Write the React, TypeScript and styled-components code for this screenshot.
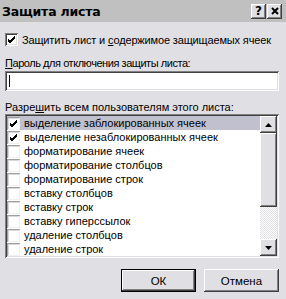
import React from 'react';
import styled, {createGlobalStyle, css} from 'styled-components';

const GlobalStyle = createGlobalStyle`
  html, body {
    margin: 0;
    padding: 0;
    background: #e0dfe3;
  }
  * {
    box-sizing: border-box;
  }
`;

const face = '#e0dfe3';

const raised = css`
  background: ${face};
  box-shadow: inset -1px -1px #404040, inset 1px 1px #ffffff,
    inset -2px -2px #808080, inset 2px 2px ${face};
`;

const sunken = css`
  box-shadow: inset 1px 1px #808080, inset -1px -1px #ffffff,
    inset 2px 2px #404040, inset -2px -2px ${face};
`;

const Dialog = styled.div`
  width: 286px;
  height: 299px;
  background: ${face};
  font-family: 'Liberation Sans', Arial, sans-serif;
  font-size: 11px;
  color: #000;
  display: flex;
  flex-direction: column;
  overflow: hidden;
  white-space: nowrap;
`;

const TitleBar = styled.div`
  height: 22px;
  background: #c0c0c0;
  display: flex;
  align-items: center;
  justify-content: space-between;
  padding: 0 4px 0 2px;
`;

const Title = styled.div`
  font-family: 'DejaVu Sans', sans-serif;
  font-weight: bold;
  font-size: 12.5px;
  letter-spacing: -0.2px;
`;

const TitleButtons = styled.div`
  display: flex;
  gap: 1px;
`;

const TitleButton = styled.div`
  ${raised};
  width: 15px;
  height: 15px;
  display: flex;
  align-items: center;
  justify-content: center;
  font-family: 'DejaVu Sans', sans-serif;
  font-weight: bold;
  font-size: 12px;
  line-height: 1;
`;

const Body = styled.div`
  display: flex;
  flex-direction: column;
  padding: 0 7px 0 5px;
`;

const CheckRow = styled.label`
  display: flex;
  align-items: center;
  gap: 4px;
  margin-top: 11px;
  height: 13px;
  letter-spacing: -0.15px;
`;

const Box = styled.span<{$flat?: boolean}>`
  width: 13px;
  height: 13px;
  flex: none;
  background: #fff;
  display: flex;
  align-items: center;
  justify-content: center;
  ${p =>
    p.$flat
      ? css`
          box-shadow: inset 1px 1px #a0a0a0, inset -1px -1px #f0f0f0,
            inset 2px 2px #d8d8d8;
        `
      : sunken};
`;

const Label = styled.div<{$top: number; $tight?: boolean}>`
  margin-top: ${p => p.$top}px;
  line-height: 13px;
  height: 13px;
  letter-spacing: ${p => (p.$tight ? '-0.45px' : '0')};
`;

const Input = styled.div`
  ${sunken};
  background: #fff;
  margin-top: 1px;
  height: 20px;
  width: 274px;
  padding: 4px 0 0 4px;
`;

const Caret = styled.div`
  width: 1px;
  height: 12px;
  background: #000;
`;

const List = styled.div`
  ${sunken};
  background: #fff;
  width: 274px;
  height: 144px;
  padding: 2px;
  display: flex;
`;

const Items = styled.div`
  flex: 1;
  display: flex;
  flex-direction: column;
`;

const Item = styled.div<{$selected?: boolean}>`
  height: 14px;
  display: flex;
  align-items: center;
  gap: 4px;
  background: ${p => (p.$selected ? '#c1c0cf' : 'transparent')};
`;

const ScrollBar = styled.div`
  width: 17px;
  display: flex;
  flex-direction: column;
  background-color: #f4f4f4;
  background-image: repeating-conic-gradient(#ffffff 0 25%, ${face} 0 50%);
  background-size: 2px 2px;
`;

const ScrollButton = styled.div`
  ${raised};
  height: 17px;
  display: flex;
  align-items: center;
  justify-content: center;
`;

const Thumb = styled.div`
  ${raised};
  height: 74px;
`;

const Track = styled.div`
  flex: 1;
`;

const Buttons = styled.div`
  display: flex;
  justify-content: flex-end;
  gap: 8px;
  margin-top: 11px;
`;

const Button = styled.div<{$default?: boolean}>`
  ${raised};
  width: 75px;
  height: 23px;
  display: flex;
  align-items: center;
  justify-content: center;
  font-size: 11.5px;
  ${p =>
    p.$default &&
    css`
      box-shadow: inset 0 0 0 1px #000, inset -2px -2px #404040,
        inset 2px 2px #ffffff, inset -3px -3px #808080;
    `};
`;

const Check = () => (
  <svg width="9" height="9" viewBox="0 0 9 9">
    <path d="M1 4 L3 6 L8 1 M1 5 L3 7 L8 2 M1 6 L3 8 L8 3" stroke="#000" strokeWidth="1" fill="none" shapeRendering="crispEdges" />
  </svg>
);

const CloseGlyph = () => (
  <svg width="8" height="8" viewBox="0 0 8 8">
    <path d="M1 1 L7 7 M7 1 L1 7" stroke="#000" strokeWidth="2" />
  </svg>
);

const Arrow = ({up}: {up?: boolean}) => (
  <svg width="7" height="4" viewBox="0 0 7 4">
    <path d={up ? 'M0 4 L3.5 0 L7 4 Z' : 'M0 0 L3.5 4 L7 0 Z'} fill="#000" />
  </svg>
);

const permissions: {text: string; checked: boolean}[] = [
  {text: 'выделение заблокированных ячеек', checked: true},
  {text: 'выделение незаблокированных ячеек', checked: true},
  {text: 'форматирование ячеек', checked: false},
  {text: 'форматирование столбцов', checked: false},
  {text: 'форматирование строк', checked: false},
  {text: 'вставку столбцов', checked: false},
  {text: 'вставку строк', checked: false},
  {text: 'вставку гиперссылок', checked: false},
  {text: 'удаление столбцов', checked: false},
  {text: 'удаление строк', checked: false},
];

export default function App() {
  return (
    <>
      <GlobalStyle />
      <Dialog>
        <TitleBar>
          <Title>Защита листа</Title>
          <TitleButtons>
            <TitleButton>?</TitleButton>
            <TitleButton>
              <CloseGlyph />
            </TitleButton>
          </TitleButtons>
        </TitleBar>
        <Body>
          <CheckRow>
            <Box>
              <Check />
            </Box>
            <span>
              Защитить лист и <u>с</u>одержимое защищаемых ячеек
            </span>
          </CheckRow>
          <Label $top={11} $tight>
            <u>П</u>ароль для отключения защиты листа:
          </Label>
          <Input>
            <Caret />
          </Input>
          <Label $top={10}>
            Разре<u>ш</u>ить всем пользователям этого листа:
          </Label>
          <List>
            <Items>
              {permissions.map((p, i) => (
                <Item key={p.text} $selected={i === 0}>
                  <Box $flat>{p.checked && <Check />}</Box>
                  {p.text}
                </Item>
              ))}
            </Items>
            <ScrollBar>
              <ScrollButton>
                <Arrow up />
              </ScrollButton>
              <Thumb />
              <Track />
              <ScrollButton>
                <Arrow />
              </ScrollButton>
            </ScrollBar>
          </List>
          <Buttons>
            <Button $default>ОК</Button>
            <Button>Отмена</Button>
          </Buttons>
        </Body>
      </Dialog>
    </>
  );
}
